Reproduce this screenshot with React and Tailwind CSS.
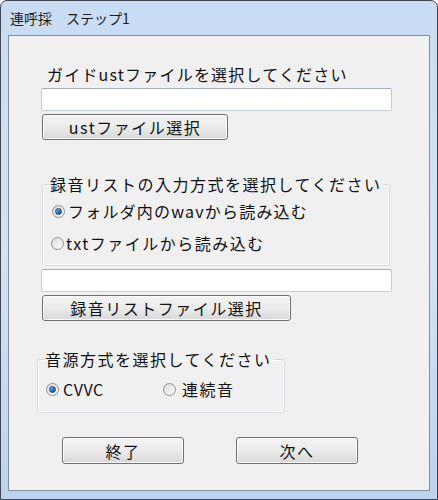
import React from 'react';

const jp = { fontFamily: '"Noto Sans CJK JP", "Noto Sans", sans-serif' };

const Radio = ({ checked }) => (
    <span className="relative inline-flex w-[13px] h-[13px] shrink-0 items-center justify-center rounded-full border border-[#8f8f8f] bg-gradient-to-br from-[#dcdcdc] to-[#fbfbfb]">
        {checked && (
            <span className="w-[7px] h-[7px] rounded-full border border-[#1e426e] bg-gradient-to-br from-[#8cc8f5] via-[#2d7fcf] to-[#174f8f]"></span>
        )}
    </span>
);

const Button = ({ children, className }) => (
    <div className={`h-[26px] flex items-center justify-center rounded-[3px] border border-[#707070] bg-gradient-to-b from-[#f4f4f4] via-[#ebebeb] to-[#d8d8d8] shadow-[inset_0_0_0_1px_#fcfcfc] text-[16px] tracking-[1.5px] text-[#111] ${className}`}>
        {children}
    </div>
);

const TextBox = ({ className }) => (
    <div className={`h-[23px] w-[351px] rounded-[2px] border border-[#c3cdd8] border-t-[#a6b0bc] bg-white ${className}`}></div>
);

export default function App() {
    return (
        <div className="w-[438px] h-[500px] flex flex-col border border-[#3f4650] rounded-t-[7px] bg-gradient-to-b from-[#c8dcf3] via-[#d3e3f6] to-[#bad4f0] overflow-hidden" style={jp}>

            {/* Title Bar */}
            <div className="h-[34px] shrink-0 flex items-center pl-[9px] pt-[1px] text-[14px] text-[#1b1b1b]">
                連呼採　ステップ1
            </div>

            {/* Client Area */}
            <div className="mx-[7px] h-[456px] flex flex-col border border-[#828f9f] bg-[#f0f0f0] text-[16px] text-[#111] tracking-[1.5px]">

                <div className="mt-[28px] ml-[38px] h-[20px] leading-[20px] tracking-[1.2px]">ガイドustファイルを選択してください</div>
                <TextBox className="mt-[4px] ml-[32px]" />
                <Button className="mt-[3px] ml-[33px] w-[186px]">ustファイル選択</Button>

                <fieldset className="mt-[34px] ml-[33px] w-[348px] border border-[#d5dbe1] rounded-[3px] shadow-[inset_0_0_0_1px_#fbfbfb] px-0 pb-[12px]">
                    <legend className="ml-[7px] h-[20px] leading-[20px] pr-[1px]">録音リストの入力方式を選択してください</legend>
                    <div className="mt-[7px] ml-[9px] h-[20px] flex items-center gap-[3px] leading-[20px]">
                        <Radio checked />
                        <span className="tracking-[1.2px]">フォルダ内のwavから読み込む</span>
                    </div>
                    <div className="mt-[12px] ml-[8px] h-[20px] flex items-center gap-[2px] leading-[20px]">
                        <Radio />
                        <span>txtファイルから読み込む</span>
                    </div>
                </fieldset>

                <TextBox className="mt-[3px] ml-[32px]" />
                <Button className="mt-[3px] ml-[33px] w-[249px]">録音リストファイル選択</Button>

                <fieldset className="mt-[28px] ml-[28px] w-[248px] border border-[#d5dbe1] rounded-[3px] shadow-[inset_0_0_0_1px_#fbfbfb] px-0 pb-[13px]">
                    <legend className="ml-[7px] h-[20px] leading-[20px] pr-[1px]">音源方式を選択してください</legend>
                    <div className="mt-[10px] h-[20px] flex items-center leading-[20px]">
                        <div className="ml-[8px] w-[117px] flex items-center gap-[4px]">
                            <Radio checked />
                            <span className="tracking-[0.5px]">CVVC</span>
                        </div>
                        <div className="flex items-center gap-[6px]">
                            <Radio />
                            <span>連続音</span>
                        </div>
                    </div>
                </fieldset>

                <div className="mt-[24px] ml-[53px] flex gap-[52px]">
                    <Button className="w-[122px] h-[27px]">終了</Button>
                    <Button className="w-[122px] h-[27px]">次へ</Button>
                </div>
            </div>
        </div>
    );
}
